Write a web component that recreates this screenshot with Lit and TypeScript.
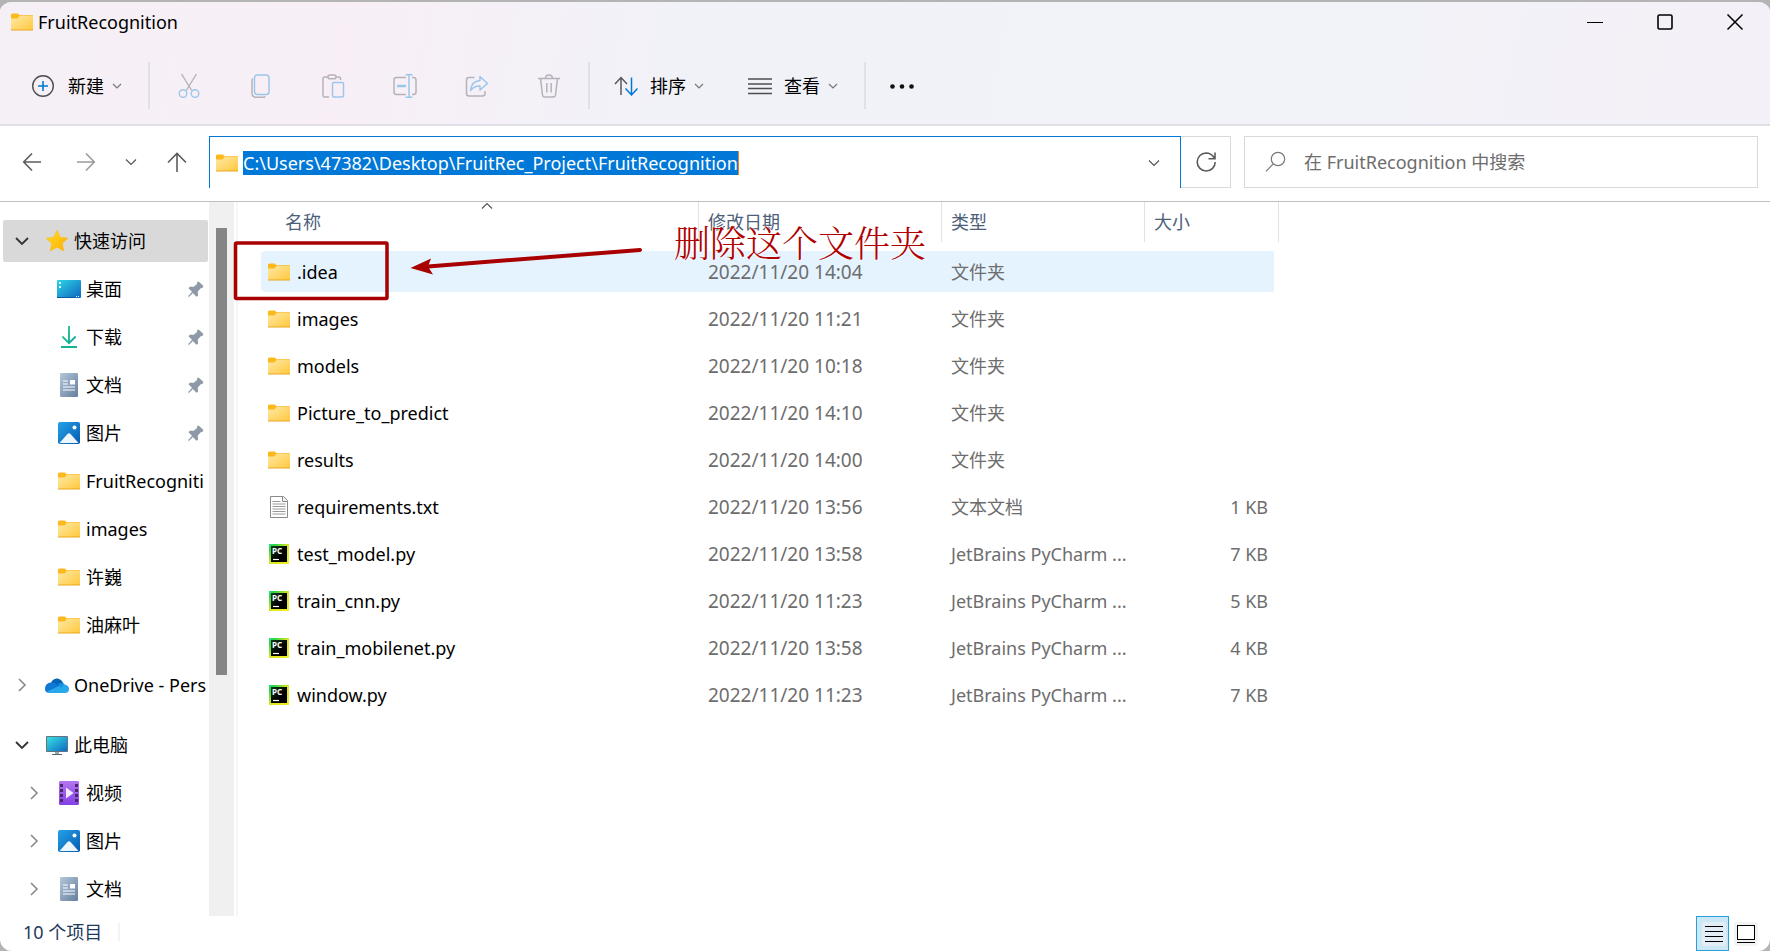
import { LitElement, html, css, svg, nothing } from "lit";
import { customElement } from "lit/decorators.js";

type Entry = { icon: string; name: string; date: string; type: string; size: string };
type Place = { icon: string; name: string; pin?: boolean; expander?: boolean };

const files: Entry[] = [
  { icon: "folder", name: ".idea", date: "2022/11/20 14:04", type: "文件夹", size: "" },
  { icon: "folder", name: "images", date: "2022/11/20 11:21", type: "文件夹", size: "" },
  { icon: "folder", name: "models", date: "2022/11/20 10:18", type: "文件夹", size: "" },
  { icon: "folder", name: "Picture_to_predict", date: "2022/11/20 14:10", type: "文件夹", size: "" },
  { icon: "folder", name: "results", date: "2022/11/20 14:00", type: "文件夹", size: "" },
  { icon: "text", name: "requirements.txt", date: "2022/11/20 13:56", type: "文本文档", size: "1 KB" },
  { icon: "pycharm", name: "test_model.py", date: "2022/11/20 13:58", type: "JetBrains PyCharm ...", size: "7 KB" },
  { icon: "pycharm", name: "train_cnn.py", date: "2022/11/20 11:23", type: "JetBrains PyCharm ...", size: "5 KB" },
  { icon: "pycharm", name: "train_mobilenet.py", date: "2022/11/20 13:58", type: "JetBrains PyCharm ...", size: "4 KB" },
  { icon: "pycharm", name: "window.py", date: "2022/11/20 11:23", type: "JetBrains PyCharm ...", size: "7 KB" },
];

const quick: Place[] = [
  { icon: "desktop", name: "桌面", pin: true },
  { icon: "download", name: "下载", pin: true },
  { icon: "document", name: "文档", pin: true },
  { icon: "picture", name: "图片", pin: true },
  { icon: "folder", name: "FruitRecogniti" },
  { icon: "folder", name: "images" },
  { icon: "folder", name: "许巍" },
  { icon: "folder", name: "油麻叶" },
];

const computer: Place[] = [
  { icon: "video", name: "视频", expander: true },
  { icon: "picture", name: "图片", expander: true },
  { icon: "document", name: "文档", expander: true },
];

const G = "#b5b3ba";
const B = "#9cc7ec";

const shapes: Record<string, unknown> = {
  folder: svg`
    <defs><linearGradient id="fo" x1="0" y1="0" x2="1" y2="1"><stop offset="0" stop-color="#ffe9a6"/><stop offset="1" stop-color="#ffc83d"/></linearGradient></defs>
    <path d="M1 5q0-1.500 1.500-1.500h5.500l2 2.500h-9z" fill="#fbb91c"/><path d="M1 8V4h6.500l1 1.200h14.500v14H1z" fill="#fbb91c"/>
    <path d="M1 8.500h6.500l2-2.500H23v14H1z" fill="url(#fo)"/><path d="M1 20h22" stroke="#e8a820" stroke-width="1"/>`,
  star: svg`<defs><linearGradient id="st" x1="0" y1="0" x2="1" y2="1"><stop offset="0" stop-color="#ffdf1f"/><stop offset="1" stop-color="#ffab0a"/></linearGradient></defs>
    <path d="M12 1.200l3.300 7 7.500 1-5.500 5.200 1.500 7.600-6.800-3.700-6.800 3.700 1.500-7.600L1.200 9.200l7.500-1z" fill="url(#st)" stroke="#f8b90c" stroke-width=".5"/>`,
  desktop: svg`<defs><linearGradient id="de" x1="0" y1="0" x2="1" y2="1"><stop offset="0" stop-color="#2fd5e2"/><stop offset="1" stop-color="#0d66c2"/></linearGradient></defs>
    <rect y="3" width="24" height="18" rx="1" fill="url(#de)"/><path d="M2 5h2v2H2zM2 9h2v2H2zM19 19h1v1h-1zM21 19h1v1h-1z" fill="#dff7ff"/><path d="M0 20.500h18" stroke="#0d5aa0"/>`,
  download: svg`<defs><linearGradient id="dl" x1="0" y1="0" x2="1" y2="1"><stop offset="0" stop-color="#3dd08a"/><stop offset="1" stop-color="#0aa3a3"/></linearGradient></defs>
    <path d="M11 1h2v14.800l5-5 1.300 1.400L12 19.500l-7.300-7.300L6 10.800l5 5z" fill="url(#dl)"/><path d="M4 21h16v2H4z" fill="#17b392"/>`,
  document: svg`<defs><linearGradient id="dc" x1="0" y1="0" x2="1" y2="1"><stop offset="0" stop-color="#b4c7da"/><stop offset="1" stop-color="#647f9f"/></linearGradient></defs>
    <rect x="3" width="18" height="24" rx="1.200" fill="url(#dc)"/><path d="M6 8h5M6 11h5M6 14h12M6 17h12" stroke="#fff" stroke-width="1.100"/><path d="M13 7h5v4.500h-5z" fill="#fff"/>`,
  picture: svg`<defs><linearGradient id="pi" x1="0" y1="0" x2="1" y2="1"><stop offset="0" stop-color="#24a3e8"/><stop offset="1" stop-color="#0759b0"/></linearGradient></defs>
    <rect x="1" y="1" width="22" height="22" rx="1.800" fill="url(#pi)"/><path d="M2.500 22l8.200-9.200q1.300-1.300 2.600 0L21.500 22z" fill="#eef6fd"/><circle cx="17.500" cy="6.500" r="2" fill="#fff"/>`,
  onedrive: svg`<path d="M5 14C5 7 11 3 16 7q3 3 3 6z" fill="#0364b8"/><path d="M0 16q0-6 6-6.500 4-.5 7 3L17 20H4q-4-.5-4-4z" fill="#0f78d4"/><path d="M14 13q2-4 6-1.500 4 1 4 4.500 0 4-4 4H5q-2 0-3-1.500z" fill="#28a8ea"/><path d="M13 11q3-2 6 0l-3 4z" fill="#1490df"/>`,
  monitor: svg`<defs><linearGradient id="mo" x1="0" y1="0" x2="1" y2="1"><stop offset="0" stop-color="#38e0df"/><stop offset="1" stop-color="#0c6cc6"/></linearGradient></defs>
    <rect x="1" y="3" width="22" height="16" rx="1" fill="#63747e"/><rect x="2" y="4" width="20" height="14" fill="url(#mo)"/><path d="M10 19h4v2h-4z" fill="#9aa6ad"/><path d="M7 21h10v1H7z" fill="#59666e"/>`,
  video: svg`<defs><linearGradient id="vi" x1="0" y1="0" x2="0" y2="1"><stop offset="0" stop-color="#b476ee"/><stop offset="1" stop-color="#8440e6"/></linearGradient></defs>
    <rect x="2" width="20" height="24" rx="1.200" fill="url(#vi)"/><path d="M3 3h3v3H3zM3 8h3v3H3zM3 13h3v3H3zM3 18h3v3H3zM18 3h3v3h-3zM18 8h3v3h-3zM18 13h3v3h-3zM18 18h3v3h-3z" fill="#4a2870"/><path d="M9 6.500l7.500 5.500L9 17.500z" fill="#f4ecfd"/>`,
  pin: svg`<path d="M14.500 4.500l5 4.500-1.200 2-1.600.3-2.900 3.200.2 4.200-1.600 1-3.500-3.700L4.800 20 4 19.200l4-4.400-3.500-3.600 1.200-1.500 4.100.1L13 7v-1.700z" fill="#8d9aa5"/>`,
  text: svg`<path d="M3.500 1.500h13l4 4v17h-17z" fill="#fff" stroke="#8a8a8a"/><path d="M15.500 1.500v5h5" fill="#f0f0f0" stroke="#8a8a8a"/><path d="M5.500 6.500h8M5.500 9h13M5.500 11.500h13M5.500 14h13M5.500 16.500h13M5.500 19h13" stroke="#9a9a9a"/>`,
  pycharm: svg`<defs><linearGradient id="pc" x1="0" y1="0" x2="1" y2="1"><stop offset="0" stop-color="#2de08a"/><stop offset=".15" stop-color="#22d648"/><stop offset=".5" stop-color="#d9e522"/><stop offset="1" stop-color="#f2ef1f"/></linearGradient>
    <linearGradient id="pk" x1="0" y1="0" x2="1" y2="1"><stop offset="0" stop-color="#0f3a16"/><stop offset=".6" stop-color="#000"/></linearGradient></defs>
    <rect x="2" y="2" width="20" height="20" fill="url(#pc)"/><rect x="4" y="4" width="16" height="16" fill="url(#pk)"/><text x="5" y="12" font-family="Noto Sans" font-size="8" font-weight="700" fill="#fff">PC</text><path d="M6 17.500h6" stroke="#fff" stroke-width="1.200"/>`,
  create: svg`<circle cx="11" cy="12" r="10.300" fill="none" stroke="#4d4d52" stroke-width="1.400"/><path d="M11 7v10M6 12h10" stroke="#0078d4" stroke-width="1.600"/>`,
  cut: svg`<g fill="none" stroke-width="1.400"><path d="M4.500 0l10.200 16.500M19.500 0L9.300 16.500" stroke="${G}"/><circle cx="6" cy="19.500" r="3.800" stroke="${B}"/><circle cx="18" cy="19.500" r="3.800" stroke="${B}"/></g>`,
  copy: svg`<g fill="none" stroke-width="1.500"><path d="M4 4.500q-1 .7-1 2V19q0 4.300 4.300 4.300H14q1.700 0 2.200-1" stroke="${G}"/><rect x="5.500" y="1" width="14.500" height="19.500" rx="2.800" stroke="${B}"/></g>`,
  paste: svg`<g fill="none" stroke-width="1.500"><path d="M7 3H3.500Q2 3 2 4.500v17Q2 23 3.500 23H8M15.500 3H18q1.500 0 1.500 1.500V6" stroke="${G}"/><rect x="7" y="1" width="8" height="3.800" rx="1.900" stroke="${G}"/><rect x="11.500" y="8.500" width="11" height="14.500" rx="1.500" stroke="${B}"/></g>`,
  rename: svg`<g fill="none" stroke-width="1.500"><path d="M13 3.500H3.500Q1 3.500 1 6v12q0 2.500 2.500 2.500H13M19 3.500h1.500Q23 3.500 23 6v12q0 2.500-2.500 2.500H19" stroke="${G}"/><path d="M12.500 .8h7M12.500 23.200h7M16 1v22" stroke="${B}"/><path d="M4 12h9" stroke="${B}" stroke-width="2.400"/></g>`,
  share: svg`<g fill="none" stroke-width="1.500" stroke-linejoin="round"><path d="M9.500 3.500H4Q1.500 3.500 1.500 6v13.500Q1.500 22 4 22h13.500q2.500 0 2.500-2.500V17" stroke="${G}"/><path d="M15 2.500l7.500 7-7.500 6.500v-4q-6.500 0-9.500 4.700Q6 7.500 15 6.500z" stroke="${B}"/></g>`,
  trash: svg`<g fill="none" stroke="${G}" stroke-width="1.500"><path d="M1 4.500h22M3.500 4.500l2 16.500q.3 2 2.300 2h8.400q2 0 2.300-2l2-16.500M8.500 4.500q0-3.500 3.500-3.500t3.500 3.500M9.800 9v9.500M14.200 9v9.500"/></g>`,
  sort: svg`<g fill="none" stroke-width="1.500"><path d="M7 21V3.500M1 10l6-6.500 6 6.500" stroke="#58585c"/><path d="M17.500 3.500V21M11.500 14.500l6 6.500 6-6.500" stroke="#0078d4"/></g>`,
  view: svg`<path d="M0 5h24M0 10h24M0 14.500h24M0 19.500h24" stroke="#4d4d52" stroke-width="1.400"/>`,
  more: svg`<g fill="#111"><circle cx="2.500" cy="12.500" r="2.300"/><circle cx="12" cy="12.500" r="2.300"/><circle cx="21.500" cy="12.500" r="2.300"/></g>`,
  back: svg`<path d="M21 12H4M12 3.500L3.700 12l8.300 8.500" fill="none" stroke="#5c5c5c" stroke-width="1.600"/>`,
  forward: svg`<path d="M3 12h17M12 3.500l8.300 8.500-8.300 8.500" fill="none" stroke="#9b9b9b" stroke-width="1.600"/>`,
  up: svg`<path d="M12 22V4M3 12.500l9-9 9 9" fill="none" stroke="#5c5c5c" stroke-width="1.600"/>`,
  refresh: svg`<path d="M20.500 8.500Q17.500 3 12 3a9 9 0 1 0 9.200 9M21 2.500v6.300h-6.500" fill="none" stroke="#5c5c5c" stroke-width="1.600"/>`,
  search: svg`<circle cx="14" cy="9" r="6.700" fill="none" stroke="#7a7a7a" stroke-width="1.200"/><path d="M9.300 13.800L2 21.300" stroke="#7a7a7a" stroke-width="1.200"/>`,
  min: svg`<path d="M4 12.500h16" stroke="#000" stroke-width="1.200"/>`,
  max: svg`<rect x="5" y="5" width="14" height="14" rx="1.500" fill="none" stroke="#000" stroke-width="1.600"/>`,
  close: svg`<path d="M4.500 4.500l15 15M19.500 4.500l-15 15" stroke="#000" stroke-width="1.500"/>`,
  down: svg`<path d="M6 9l6 6 6-6" fill="none" stroke="#333" stroke-width="1.800"/>`,
  thin: svg`<path d="M7 9.500l5 5 5-5" fill="none" stroke="#555" stroke-width="1.200"/>`,
  small: svg`<path d="M7 10l4 4 4-4" fill="none" stroke="#777" stroke-width="1.200"/>`,
  right: svg`<path d="M9 6l6 6-6 6" fill="none" stroke="#8a8a8a" stroke-width="1.600"/>`,
  details: svg`<rect width="24" height="24" rx="3" fill="#e3edf5"/><path d="M3 4.500h18M3 9.500h18M3 14.500h18M3 19.500h18" stroke="#000"/>`,
  tiles: svg`<rect width="24" height="24" rx="3" fill="#f3f3f3"/><rect x="3.500" y="3.500" width="17" height="14" fill="#fff" stroke="#000"/><path d="M3 20.500h18" stroke="#000"/>`,
};

const icon = (name: string) =>
  html`<svg class="icon" viewBox="0 0 24 24" aria-hidden="true">${shapes[name]}</svg>`;

@customElement("app-root")
export class AppRoot extends LitElement {
  static styles = css`
    :host {
      display: block;
      background: #b4b4b4;
      color: #000;
      font: 18px/24px "Noto Sans", "Noto Sans CJK SC", sans-serif;
    }
    * { box-sizing: border-box; }
    button, input {
      font: inherit;
      color: inherit;
      border: 0;
      padding: 0;
      margin: 0;
      background: none;
      outline: none;
      border-radius: 0;
    }
    .icon { width: 24px; height: 24px; flex: none; display: block; }
    .window {
      min-height: 100vh;
      display: flex;
      flex-direction: column;
      background: #fff;
      border-top: 2px solid #b4b4b4;
      border-radius: 12px;
      overflow: hidden;
    }
    .top {
      background: linear-gradient(100deg, #f5f0f6 0%, #f8eff6 20%, #f1f2f8 38%, #f1f3f8 75%, #f4f0f7 95%);
      border-bottom: 2px solid #e0dfe6;
    }
    .titlebar { display: flex; align-items: center; height: 40px; padding-left: 10px; }
    .title { flex: 1; margin: 0; padding-left: 4px; font-size: 18px; font-weight: 400; }
    .control { width: 70px; height: 40px; display: grid; place-items: center; }
    .toolbar { display: flex; padding: 20px 0 15px; height: 82px; }
    .group { display: flex; align-items: center; border-right: 2px solid #e2e0e7; }
    .create { padding: 0 18px 0 32px; }
    .edits { padding: 0 27px; gap: 48px; }
    .menus { padding: 0 18px 0 24px; gap: 36px; }
    .rest { display: flex; align-items: center; padding-left: 24px; }
    .menu { display: flex; align-items: center; }
    .menu span { padding: 0 2px 0 12px; }

    .navbar { display: flex; padding: 10px 12px 13px 5px; border-bottom: 1px solid #c0c0c0; }
    .moves { display: grid; grid-template-columns: 54px 54px 36px 56px; place-items: center; padding-right: 4px; }
    .address {
      flex: 1;
      display: flex;
      align-items: center;
      height: 52px;
      padding: 0 14px 0 5px;
      border: 1px solid #0078d7;
      border-bottom: 0;
    }
    .address label { display: flex; flex: 1; align-items: center; gap: 4px; }
    .path {
      field-sizing: content;
      height: 24px;
      background: #0078d7;
      color: #fff;
      border-right: 1px solid #f08020;
    }
    .refresh { width: 50px; display: grid; place-items: center; border: 1px solid #d9d9d9; border-left: 0; }
    .search {
      display: flex;
      align-items: center;
      gap: 16px;
      flex: 0 1 514px;
      margin-left: 13px;
      padding-left: 19px;
      border: 1px solid #d9d9d9;
    }
    .search input { flex: 1; min-width: 0; }
    .search input::placeholder { color: #6d6d6d; opacity: 1; }

    .body { flex: 1; display: flex; position: relative; }
    .tree { width: 209px; padding: 18px 1px 0 3px; overflow: hidden; }
    .tree ul { list-style: none; margin: 0; padding: 0; }
    .section { margin-bottom: 18px; }
    .place {
      display: flex;
      align-items: center;
      height: 42px;
      border-radius: 2px;
      padding-left: 7px;
      white-space: nowrap;
    }
    .place.chosen { background: #d9d9d9; }
    .place.child { margin: 6px 0; padding-left: 19px; }
    .caret { width: 24px; height: 24px; margin-right: 11px; flex: none; }
    .link {
      display: flex;
      flex: 1;
      min-width: 0;
      align-items: center;
      gap: 5px;
      color: inherit;
      text-decoration: none;
    }
    .pin { flex: none; width: 24px; }
    .track { width: 25px; background: #f0f0f0; padding: 26px 7px 0; }
    .thumb { height: 65%; background: #858585; }
    .list { flex: 1; min-width: 0; margin-left: 2px; padding-left: 23px; border-left: 2px solid #f6f6f6; }

    .files { table-layout: fixed; width: 1018px; border-collapse: separate; border-spacing: 0; }
    .files th, .files td { padding: 0; text-align: left; font-weight: 400; white-space: nowrap; }
    .files th { height: 46px; vertical-align: top; color: #4c607a; }
    .head { display: block; height: 40px; line-height: 40px; border-right: 1px solid #e2e2e2; padding-left: 9px; position: relative; }
    .name .head { padding-left: 24px; }
    .name { width: 438px; }
    .date { width: 243px; }
    .type { width: 203px; }
    .order { position: absolute; left: 214px; top: -8px; transform: rotate(180deg); }
    .files td {
      height: 47px;
      border: 0 solid transparent;
      border-width: 3px 0;
      background-clip: padding-box;
      color: #6d6d6d;
      padding-left: 9px;
    }
    .files td:first-child { color: #000; padding-left: 6px; border-radius: 6px 0 0 6px; }
    .files td:last-child { text-align: right; padding-right: 6px; border-right-width: 5px; border-radius: 0 6px 6px 0; }
    .files .when { font-size: 19px; }
    .files .hover td { background-color: #e5f3ff; }
    .file { display: flex; align-items: center; gap: 6px; }

    .marks { position: absolute; left: 0; top: 0; pointer-events: none; }
    .note {
      position: absolute;
      left: 674px;
      top: 18px;
      margin: 0;
      font: 300 36px/44px "Noto Serif CJK SC", "Noto Sans CJK SC", serif;
      color: #b00000;
      text-shadow: 0 0 2px #fff, 0 0 2px #fff;
      white-space: nowrap;
    }

    .status { display: flex; height: 35px; align-items: center; padding: 0 12px 0 23px; color: #1e395b; }
    .count { flex: 1; display: flex; gap: 16px; padding-bottom: 3px; }
    .count::after { content: ""; width: 2px; height: 18px; margin-top: 3px; background: #f3f3f3; }
    .mode { height: 35px; display: grid; place-items: center; }
    .mode.on { width: 33px; padding-left: 3px; margin-right: 5px; border: 1px solid #26a0da; background: #cce8f6; }
  `;

  private place(p: Place) {
    return html`<li class="place child">
      ${p.expander
        ? html`<button class="caret" aria-label="展开">${icon("right")}</button>`
        : html`<span class="caret"></span>`}
      <a class="link" href="#">${icon(p.icon)}<span>${p.name}</span></a>
      ${p.pin ? html`<span class="pin">${icon("pin")}</span>` : nothing}
    </li>`;
  }

  private root(glyph: string, name: string, caret: string, chosen = false) {
    return html`<div class="place ${chosen ? "chosen" : ""}">
      <button class="caret" aria-label="展开">${icon(caret)}</button>
      <a class="link" href="#">${icon(glyph)}<span>${name}</span></a>
    </div>`;
  }

  render() {
    return html`<div class="window">
      <header class="top">
        <div class="titlebar">
          ${icon("folder")}
          <h1 class="title">FruitRecognition</h1>
          <button class="control" aria-label="最小化">${icon("min")}</button>
          <button class="control" aria-label="最大化">${icon("max")}</button>
          <button class="control" aria-label="关闭">${icon("close")}</button>
        </div>
        <div class="toolbar">
          <div class="group create">
            <button class="menu">${icon("create")}<span>新建</span>${icon("small")}</button>
          </div>
          <div class="group edits">
            <button aria-label="剪切">${icon("cut")}</button>
            <button aria-label="复制">${icon("copy")}</button>
            <button aria-label="粘贴">${icon("paste")}</button>
            <button aria-label="重命名">${icon("rename")}</button>
            <button aria-label="共享">${icon("share")}</button>
            <button aria-label="删除">${icon("trash")}</button>
          </div>
          <div class="group menus">
            <button class="menu">${icon("sort")}<span>排序</span>${icon("small")}</button>
            <button class="menu">${icon("view")}<span>查看</span>${icon("small")}</button>
          </div>
          <div class="rest"><button aria-label="更多">${icon("more")}</button></div>
        </div>
      </header>

      <div class="navbar">
        <div class="moves">
          <button aria-label="后退">${icon("back")}</button>
          <button aria-label="前进">${icon("forward")}</button>
          <button aria-label="最近">${icon("thin")}</button>
          <button aria-label="上一级">${icon("up")}</button>
        </div>
        <div class="address">
          <label>${icon("folder")}<input class="path" aria-label="地址" spellcheck="false"
            .value=${"C:\\Users\\47382\\Desktop\\FruitRec_Project\\FruitRecognition"} /></label>
          <button aria-label="历史">${icon("thin")}</button>
        </div>
        <button class="refresh" aria-label="刷新">${icon("refresh")}</button>
        <label class="search">${icon("search")}<input aria-label="搜索" placeholder="在 FruitRecognition 中搜索" /></label>
      </div>

      <div class="body">
        <nav class="tree">
          <div class="section">
            ${this.root("star", "快速访问", "down", true)}
            <ul>${quick.map((p) => this.place(p))}</ul>
          </div>
          <div class="section">${this.root("onedrive", "OneDrive - Pers", "right")}</div>
          <div>
            ${this.root("monitor", "此电脑", "down")}
            <ul>${computer.map((p) => this.place(p))}</ul>
          </div>
        </nav>
        <div class="track"><div class="thumb"></div></div>
        <main class="list">
          <table class="files">
            <thead>
              <tr>
                <th class="name"><span class="head">名称<span class="order">${icon("thin")}</span></span></th>
                <th class="date"><span class="head">修改日期</span></th>
                <th class="type"><span class="head">类型</span></th>
                <th><span class="head">大小</span></th>
              </tr>
            </thead>
            <tbody>
              ${files.map((f, i) => html`<tr class=${i === 0 ? "hover" : ""}>
                <td><div class="file">${icon(f.icon)}<span>${f.name}</span></div></td>
                <td class="when">${f.date}</td>
                <td>${f.type}</td>
                <td>${f.size}</td>
              </tr>`)}
            </tbody>
          </table>
        </main>
        <svg class="marks" width="660" height="110" aria-hidden="true">
          <rect x="235.500" y="41" width="151.500" height="55.500" rx="1" fill="none" stroke="#a80000" stroke-width="3.500"/>
          <path d="M428 64.500L640 48" stroke="#a80000" stroke-width="4" stroke-linecap="round"/>
          <path d="M410.500 66L431 56.500l-3 8 5 8z" fill="#a80000"/>
        </svg>
        <p class="note">删除这个文件夹</p>
      </div>

      <footer class="status">
        <span class="count">10 个项目</span>
        <button class="mode on" aria-label="详细信息">${icon("details")}</button>
        <button class="mode" aria-label="大图标">${icon("tiles")}</button>
      </footer>
    </div>`;
  }
}
